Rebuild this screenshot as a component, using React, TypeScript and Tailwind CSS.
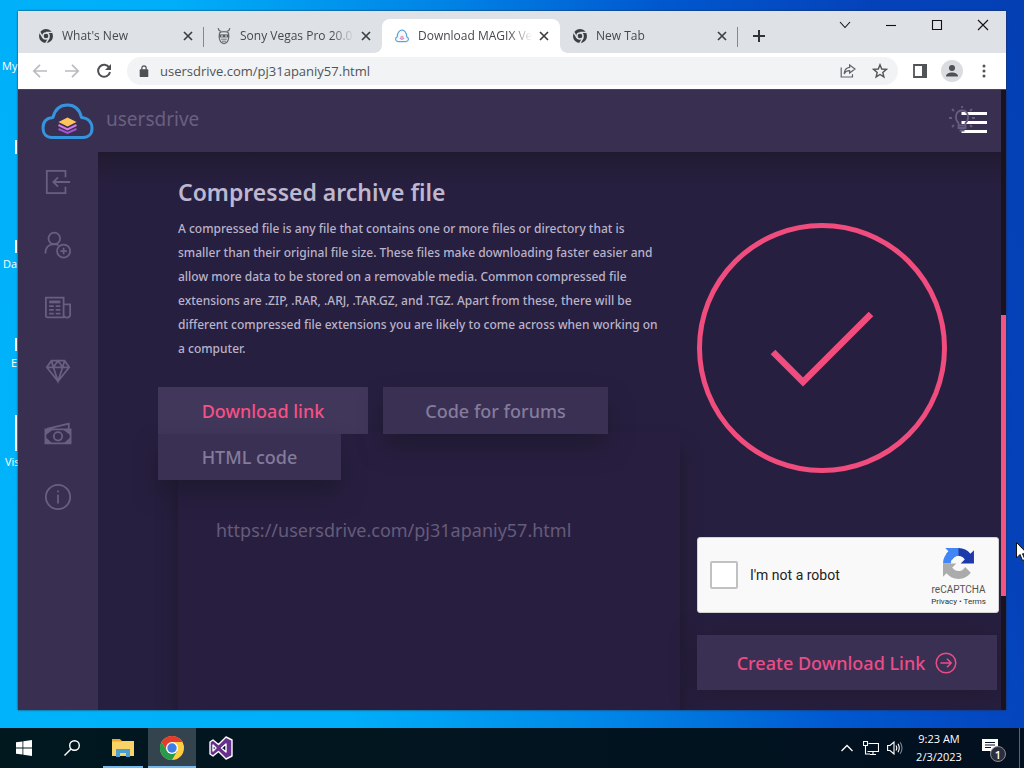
import React from "react";

const uiFont = "font-['Open_Sans','Noto_Sans',sans-serif]";
const siteFont = "font-['Noto_Sans',sans-serif]";

function ChromeMono() {
  return (
    <svg viewBox="0 0 16 16" className="size-4 shrink-0" aria-hidden="true">
      <circle cx="8" cy="8" r="7" fill="#3c4043" />
      <circle cx="8" cy="8" r="3.1" fill="#3c4043" stroke="#dee1e6" strokeWidth="1.5" />
      <path d="M8 4.4H14.4M5 9.8L1.7 4.2M11 9.9L7.9 15.2" stroke="#dee1e6" strokeWidth="1.4" />
    </svg>
  );
}

function MaskIcon() {
  return (
    <svg viewBox="0 0 16 18" className="h-[18px] w-4 shrink-0" fill="none" stroke="#66696d" aria-hidden="true">
      <path d="M2.2 1.2C2.6 3.4 4 4.4 5.4 4.2M13.8 1.2C13.4 3.4 12 4.4 10.6 4.2" strokeWidth="1.2" />
      <path d="M3.5 6.2C4.6 4 11.4 4 12.5 6.2 13.6 11 12 16.4 8 16.6 4 16.4 2.4 11 3.5 6.2Z" strokeWidth="1.2" />
      <path d="M3.4 7.4H12.6V10.4H3.4Z" fill="#55585c" stroke="none" />
      <path d="M4.8 9H7M9 9H11" stroke="#e8eaed" strokeWidth="1" />
      <path d="M5.2 12.2H10.8M6 14.2H10" strokeWidth=".9" />
    </svg>
  );
}

function CloudFavicon() {
  return (
    <svg viewBox="0 0 16 16" className="size-4 shrink-0" aria-hidden="true">
      <path d="M4 13.6C1 13.4.8 9.8 3.2 8.9 3 4.2 6 2.2 8 2.2S13 4.2 12.8 8.9C15.2 9.8 15 13.4 12 13.6Z" fill="#f7f9fd" stroke="#58a7df" strokeWidth="1.2" />
      <path d="M5.8 9L8 7.6 10.2 9 8 10.4Z" fill="#f0a7a0" />
      <path d="M5.8 10.2L8 11.4 10.2 10.2" fill="none" stroke="#c88be0" strokeWidth="1.2" />
    </svg>
  );
}

function CloseGlyph() {
  return (
    <svg viewBox="0 0 10 10" className="size-[10px]" stroke="#3c4043" strokeWidth="1.7" aria-hidden="true">
      <path d="M1 1L9 9M9 1L1 9" />
    </svg>
  );
}

type TabProps = { title: string; icon: React.ReactNode; active?: boolean; divider?: boolean };

function BrowserTab({ title, icon, active, divider }: TabProps) {
  return (
    <div className={`relative flex h-[34px] w-[178px] min-w-0 items-center rounded-t-lg pr-2 pl-3 ${active ? "bg-white" : ""}`}>
      {icon}
      <span className="ml-2 min-w-0 flex-1 overflow-hidden text-xs whitespace-nowrap text-[#45494d] [mask-image:linear-gradient(to_right,black_80%,transparent)]">
        {title}
      </span>
      <button aria-label={`Close ${title}`} className="ml-1 flex size-4 items-center justify-center">
        <CloseGlyph />
      </button>
      {divider && <span className="absolute top-2 right-0 h-5 w-px bg-[#85888c]" />}
      {active && (
        <>
          <svg viewBox="0 0 8 8" className="absolute bottom-0 -left-2 size-2" fill="#fff" aria-hidden="true"><path d="M8 0V8H0C4.4 8 8 4.4 8 0Z" /></svg>
          <svg viewBox="0 0 8 8" className="absolute -right-2 bottom-0 size-2" fill="#fff" aria-hidden="true"><path d="M0 0V8H8C3.6 8 0 4.4 0 0Z" /></svg>
        </>
      )}
    </div>
  );
}

function TitleBar() {
  return (
    <div className="flex h-[42px] items-end bg-[#dee1e6] pl-2">
      <BrowserTab title="What's New" icon={<ChromeMono />} divider />
      <BrowserTab title="Sony Vegas Pro 20.0.9" icon={<MaskIcon />} />
      <BrowserTab title="Download MAGIX Vegas" icon={<CloudFavicon />} active />
      <BrowserTab title="New Tab" icon={<ChromeMono />} divider />
      <button aria-label="New tab" className="ml-[9px] flex h-[34px] w-6 items-center justify-center">
        <svg viewBox="0 0 12 12" className="size-3" stroke="#303336" strokeWidth="2" aria-hidden="true"><path d="M6 0V12M0 6H12" /></svg>
      </button>
      <div className="ml-auto flex self-start">
        {[
          ["Search tabs", "M2 4L7 9.5 12 4"],
          ["Minimize", "M2 7.5H12"],
          ["Maximize", "M2.5 2.5H11.5V11.5H2.5Z"],
          ["Close window", "M2 2L12 12M12 2L2 12"],
        ].map(([label, d]) => (
          <button key={label} aria-label={label} className="flex h-7 w-[46px] items-center justify-center">
            <svg viewBox="0 0 14 14" className="size-[14px]" fill="none" stroke="#111" strokeWidth="1.1" aria-hidden="true"><path d={d} /></svg>
          </button>
        ))}
      </div>
    </div>
  );
}

function Toolbar() {
  return (
    <div className="flex h-[37px] items-center border-b border-[#4a4750] bg-white pr-[6px] pl-[6px]">
      <button aria-label="Back" className="flex w-8 justify-center">
        <svg viewBox="0 0 16 16" className="size-4" fill="none" stroke="#b9bbbe" strokeWidth="1.7" aria-hidden="true"><path d="M15 8H2M8 1.8L1.8 8 8 14.2" /></svg>
      </button>
      <button aria-label="Forward" className="flex w-8 justify-center">
        <svg viewBox="0 0 16 16" className="size-4" fill="none" stroke="#b9bbbe" strokeWidth="1.7" aria-hidden="true"><path d="M1 8H14M8 1.8L14.2 8 8 14.2" /></svg>
      </button>
      <button aria-label="Reload" className="flex w-8 justify-center">
        <svg viewBox="0 0 16 16" className="size-4" aria-hidden="true">
          <path d="M13.2 4.6A6 6 0 1 0 14 9" fill="none" stroke="#4d5156" strokeWidth="2" />
          <path d="M15 1V7H9Z" fill="#4d5156" />
        </svg>
      </button>
      <div className="ml-[7px] flex h-7 min-w-0 flex-1 items-center rounded-full bg-[#f1f3f4] pr-[2px] pl-3">
        <svg viewBox="0 0 10 14" className="h-3 w-[10px]" aria-hidden="true">
          <rect x="0" y="5" width="10" height="9" rx="1" fill="#4d5156" />
          <path d="M2.5 6V3.5a2.5 2.5 0 0 1 5 0V6" fill="none" stroke="#4d5156" strokeWidth="1.4" />
        </svg>
        <input
          aria-label="Address"
          defaultValue="usersdrive.com/pj31apaniy57.html"
          className="ml-[11px] min-w-0 flex-1 bg-transparent text-[13px] leading-5 text-[#505459] outline-none"
        />
        <button aria-label="Share" className="flex w-8 justify-center">
          <svg viewBox="0 0 16 16" className="size-4" fill="none" stroke="#5f6368" strokeWidth="1.2" aria-hidden="true">
            <path d="M1.2 4.5V14H12.5V11.2" />
            <path d="M9.6 2L15 6 9.6 10V7.6C6.6 7.5 5.2 8.8 4.2 11 4.4 7.4 6.2 4.8 9.6 4.4Z" />
          </svg>
        </button>
        <button aria-label="Bookmark" className="flex w-8 justify-center">
          <svg viewBox="0 0 16 16" className="size-4" fill="none" stroke="#505458" strokeWidth="1.4" aria-hidden="true">
            <path d="M8 1.8L9.7 6 14.4 6.4 10.8 9.4 11.9 13.9 8 11.5 4.1 13.9 5.2 9.4 1.6 6.4 6.3 6Z" />
          </svg>
        </button>
      </div>
      <button aria-label="Side panel" className="ml-[6px] flex w-8 justify-center">
        <svg viewBox="0 0 14 14" className="size-[14px]" aria-hidden="true"><path d="M1 1H13V13H1Z" fill="none" stroke="#505458" strokeWidth="1.8" /><path d="M9 0H14V14H9Z" fill="#505458" /></svg>
      </button>
      <button aria-label="Profile" className="flex w-8 justify-center">
        <svg viewBox="0 0 22 22" className="size-[22px]" aria-hidden="true"><circle cx="11" cy="11" r="11" fill="#dadce0" /><circle cx="11" cy="8" r="3" fill="#4d5156" /><path d="M5 16.5C5 13.5 8 12.4 11 12.4S17 13.5 17 16.5Z" fill="#4d5156" /></svg>
      </button>
      <button aria-label="Menu" className="flex w-8 justify-center">
        <svg viewBox="0 0 4 14" className="h-[14px] w-1" fill="#505458" aria-hidden="true"><circle cx="2" cy="2" r="1.5" /><circle cx="2" cy="7" r="1.5" /><circle cx="2" cy="12" r="1.5" /></svg>
      </button>
    </div>
  );
}

const navItems = [
  { label: "Login", art: <path d="M23 10V3H3V27H23V20M28 15H10M15 10L10 15 15 20" /> },
  { label: "Sign up", art: <><circle cx="11" cy="8" r="6.2" /><path d="M1.5 24C1.5 17 5.5 14 11 14 13 14 14.5 14.5 15.5 15.2" /><circle cx="21" cy="21.5" r="7" /><path d="M21 18V25M17.5 21.5H24.5" /></> },
  { label: "News", art: <><path d="M2 4H21V25H4C2.5 25 2 24 2 23ZM21 11H28V22C28 26 23 26 21.5 23.5" /><path d="M5.5 8.5H17.5" strokeWidth="3" /><path d="M5.5 13H10.5M12.5 13H17.5M5.5 17H10.5M12.5 17H17.5M5.5 21H10.5M12.5 21H17.5" /></> },
  { label: "Premium", art: <><path d="M8 4H22L27 11 15 26 3 11ZM3 11H27M10 11L15 26 20 11 15 4 10 11 8 4M20 11L22 4" /></> },
  { label: "Earn money", art: <><path d="M1.5 10H28.5V25H1.5ZM3 9.5L26.5 4V9.5" /><circle cx="15" cy="17.5" r="4.5" /><path d="M2 11H7L2 15ZM23 11H28V15ZM2 20L7 24.5H2ZM28 20V24.5H23Z" fill="currentColor" /></> },
  { label: "About", art: <><circle cx="15" cy="15" r="13" /><path d="M15 12.5V22M15 8V10" /></> },
];

function SideNav() {
  return (
    <nav className="-mt-[2px] w-20 shrink-0 bg-[#392f51]">
      {navItems.map(({ label, art }) => (
        <a key={label} href={`#${label}`} aria-label={label} className="flex h-[63px] items-center justify-center text-[#696080]">
          <svg viewBox="0 0 30 30" className="size-7" fill="none" stroke="currentColor" strokeWidth="1.9" aria-hidden="true">{art}</svg>
        </a>
      ))}
    </nav>
  );
}

function SiteHeader() {
  return (
    <header className="flex h-[62px] items-center bg-[#392f51] pr-[14px] pl-[22px]">
      <a href="#home" className="flex items-center text-[19px] leading-7 text-[#696080]">
        <svg viewBox="0 0 54 38" className="h-[38px] w-[54px]" fill="none" aria-hidden="true">
          <path d="M12 35.5C5.500 35.500 3 31 3 26 3 19 7 16 13 15.500 15 7 20.500 3 27.500 3S39.500 7 41.500 15.500C48 16 52 20 52 26.500 52 32 48.500 35.500 43 35.500Z" stroke="#3594dd" strokeWidth="3" strokeLinejoin="round" />
          <path d="M18.5 20L27.5 15.5 36.5 20 27.5 24.5Z" fill="#ffc45d" />
          <path d="M18.5 23L27.5 27.3 36.5 23" stroke="#d479e8" strokeWidth="2" />
          <path d="M18.5 27L27.5 31 36.5 27" stroke="#a652d4" strokeWidth="2" />
        </svg>
        <span className="ml-3 pb-1">usersdrive</span>
      </a>
      <button aria-label="Menu and theme" className="ml-auto">
        <svg viewBox="0 0 38 30" className="h-[30px] w-[38px]" fill="none" aria-hidden="true">
          <path d="M12.5 7.5H38M12.5 16.5H38M12.5 25.5H38" stroke="#fff" strokeWidth="3" />
          <g stroke="#665d7e" strokeWidth="1.8"><path d="M9.5 17C5.5 13.5 6 4.5 13 4.5S20.5 13.5 16.5 17V22H9.5ZM10 19.5H16M10.5 24.5H15.5" /><path d="M0 12H3M23 12H26M3 3L5 5M23 3L21 5M3 21L5 19M23 21L21 19M13 0V2" /></g>
        </svg>
      </button>
    </header>
  );
}

function RecaptchaLogo() {
  return (
    <svg viewBox="0 0 64 64" className="size-[31px]" aria-hidden="true">
      <path d="M64 32C64 31.5 64 31.1 63.9 30.6V4.6L56.7 11.8C50.8 4.6 42 0 32 0 21.6 0 12.4 4.9 6.6 12.6L18.4 24.5C19.5 22.3 21.2 20.5 23.1 19.1 25.1 17.5 28 16.2 32 16.2 32.5 16.2 32.9 16.3 33.2 16.4 38.1 16.7 42.4 19.5 44.9 23.5L36.5 31.9Z" fill="#1c3aa9" />
      <path d="M31.9 0H4.6L11.8 7.2C4.6 13.1 0 22 0 32H16.2C16.2 28.5 17.1 25.8 18.4 24.5 19.5 22.3 21.2 20.5 23.1 19.1 25.1 17.5 28 16.2 32 16.2Z" fill="#4285f4" />
      <path d="M0 32V59.3L7.2 52.1C13.1 59.3 22 63.9 32 63.9 42.4 63.9 51.6 59 57.4 51.3L45.6 39.4C44.4 41.5 42.8 43.4 40.9 44.8 38.9 46.4 36 47.7 32 47.7 26.2 47.3 21.5 44.4 19 40.4L27.5 31.9Z" fill="#ababab" />
    </svg>
  );
}

function DownloadInfo() {
  return (
    <section className="flex w-[522px] shrink-0 flex-col">
      <h1 className="ml-5 text-[23px] leading-8 font-semibold text-[#bdb7cf]">Compressed archive file</h1>
      <p className="mt-[9px] ml-5 text-xs leading-6 font-medium text-[#b9b3ca]">
        A compressed file is any file that contains one or more files or directory that is
        <br />smaller than their original file size. These files make downloading faster easier and
        <br />allow more data to be stored on a removable media. Common compressed file
        <br />extensions are .ZIP, .RAR, .ARJ, .TAR.GZ, and .TGZ. Apart from these, there will be
        <br />different compressed file extensions you are likely to come across when working on
        <br />a computer.
      </p>
      <div className="relative z-[1] mt-[26px] flex flex-wrap gap-x-[15px] text-lg font-medium text-[#847c9a]">
        <button className="h-[47px] w-[210px] bg-[#41375b] text-[#f65084]">Download link</button>
        <button className="h-[47px] w-[225px] bg-[#3a3054] shadow-[0_14px_22px_#1c182bb0]">Code for forums</button>
        <button className="h-[46px] w-[183px] bg-[#3a3054] shadow-[0_14px_22px_#1c182bb0]">HTML code</button>
      </div>
      <div className="-mt-12 ml-5 flex-1 bg-[#281f40] pt-[84px] pl-[38px] text-lg text-[#655c7a] shadow-[0_16px_16px_#1e192c]">
        https://usersdrive.com/pj31apaniy57.html
      </div>
    </section>
  );
}

function CreateLink() {
  return (
    <section className="ml-[17px] flex w-[302px] shrink-0 flex-col">
      <svg viewBox="0 0 250 250" className="mt-[47px] size-[250px]" fill="none" stroke="#f04d7e" aria-hidden="true">
        <circle cx="125" cy="125" r="122.5" strokeWidth="5" />
        <path d="M76 129L106 159 174 91" strokeWidth="6.5" />
      </svg>
      <div className="mt-16 flex h-[76px] items-center rounded-[3px] border border-[#d3d3d3] bg-[#f9f9f9] pl-3 font-['Roboto',sans-serif] text-[#222]">
        <input id="robot" type="checkbox" className="size-7 appearance-none rounded-xs border-2 border-[#c1c1c1] bg-white" />
        <label htmlFor="robot" className="ml-3 text-sm">I'm not a robot</label>
        <div className="mr-3 ml-auto flex flex-col items-center pt-1 text-[#555]">
          <RecaptchaLogo />
          <span className="mt-1 text-[10px] leading-[14px]">reCAPTCHA</span>
          <span className="text-[8px] leading-[10px] text-[#333]"><a href="#privacy">Privacy</a> • <a href="#terms">Terms</a></span>
        </div>
      </div>
      <button className="mt-[22px] flex h-[55px] w-[300px] items-center justify-center gap-[10px] bg-[#3a3054] text-lg font-medium text-[#ea4d86] shadow-[0_4px_24px_#1f192ab0]">
        Create Download Link
        <svg viewBox="0 0 22 22" className="size-[22px]" fill="none" stroke="currentColor" strokeWidth="1.5" aria-hidden="true"><circle cx="11" cy="11" r="9.8" /><path d="M5.5 11H16M12 6.8L16.2 11 12 15.2" /></svg>
      </button>
    </section>
  );
}

function BrowserWindow() {
  return (
    <div className="flex flex-1 flex-col shadow-[0_0_2px_#2b2b3a]">
      <TitleBar />
      <Toolbar />
      <div className={`flex flex-1 ${siteFont}`}>
        <div className="flex min-w-0 flex-1 flex-col">
          <SiteHeader />
          <div className="flex flex-1">
            <SideNav />
            <main className="flex min-w-0 flex-1 overflow-hidden bg-[#271f3f] bg-[linear-gradient(#201a30,#241d38_14px,#271f3f_36px)] pt-6 pl-[60px]">
              <DownloadInfo />
              <CreateLink />
            </main>
          </div>
        </div>
        <div className="w-[5px] bg-[#18131f] pt-[225px]">
          <div className="h-[281px] bg-[#f2557f]" />
        </div>
      </div>
    </div>
  );
}

const shortcuts = [
  { label: "My", box: "top-[57px] left-0.5", mark: "top-[140px] h-[14px]" },
  { label: "Da", box: "top-[255px] left-[3px]", mark: "top-[240px] h-[13px]" },
  { label: "E", box: "top-[354px] left-[11px]", mark: "top-[338px] h-[13px]" },
  { label: "Vis", box: "top-[453px] left-[5px]", mark: "top-[415px] h-[36px]" },
];

function Taskbar() {
  return (
    <footer className="relative z-10 flex h-10 items-stretch bg-[linear-gradient(to_right,#01181f,#021020)] text-white">
      <button aria-label="Start" className="flex w-12 items-center justify-center">
        <svg viewBox="0 0 16 16" className="size-4" fill="#fff" aria-hidden="true"><path d="M0 2.3L6.5 1.4V7.5H0ZM7.3 1.3L16 0V7.5H7.3ZM0 8.4H6.5V14.6L0 13.7ZM7.3 8.4H16V16L7.3 14.7Z" /></svg>
      </button>
      <button aria-label="Search" className="flex w-12 items-center justify-center">
        <svg viewBox="0 0 16 16" className="size-4" fill="none" stroke="#fff" strokeWidth="1.4" aria-hidden="true"><circle cx="10.5" cy="5.5" r="4.8" /><path d="M7 9L.5 15.5" /></svg>
      </button>
      <button aria-label="File Explorer" className="ml-[7px] flex w-10 items-center justify-center border-b-2 border-[#76b9ed] pt-0.5">
        <svg viewBox="0 0 22 20" className="h-5 w-[22px]" aria-hidden="true"><path d="M0 2H8L10 3H22V18H0Z" fill="#f9d365" /><path d="M0 1H8L10 3.5H0Z" fill="#e8a92e" /><path d="M4 11H18V19H14V15H8V19H4Z" fill="#4a9fd0" /></svg>
      </button>
      <button aria-label="Google Chrome" className="ml-[5px] flex w-12 items-center justify-center border-b-2 border-[#76b9ed] bg-[#33444f] pt-0.5">
        <svg viewBox="0 0 24 24" className="size-6" aria-hidden="true">
          <circle cx="12" cy="12" r="12" fill="#ffcd40" />
          <path d="M1.600 6A12 12 0 0 1 22.4 6H12L6.8 15Z" fill="#e33b2e" />
          <path d="M1.600 6A12 12 0 0 0 12 24L17.2 15H12L6.8 15Z" fill="#279b4d" />
          <circle cx="12" cy="12" r="6" fill="#fff" /><circle cx="12" cy="12" r="4.7" fill="#3d7de4" />
        </svg>
      </button>
      <button aria-label="Visual Studio" className="flex w-[50px] items-center justify-center">
        <svg viewBox="0 0 24 24" className="size-6" aria-hidden="true"><path d="M17 1L23 4V20L17 23 9.5 15.5 4 20 1 18V6L4 4 9.5 8.5ZM4 9V15L7 12ZM17 8L12.5 12 17 16Z" fill="#68308e" fillRule="evenodd" stroke="#fff" strokeWidth="1.4" strokeLinejoin="round" /></svg>
      </button>
      <div className="ml-auto flex items-center">
        <svg viewBox="0 0 12 8" className="h-2 w-3" fill="none" stroke="#fff" strokeWidth="1.3" aria-hidden="true"><path d="M.5 7L6 1.5 11.5 7" /></svg>
        <svg viewBox="0 0 16 14" className="ml-[10px] h-[14px] w-4" fill="none" stroke="#fff" strokeWidth="1.1" aria-hidden="true"><path d="M5.5 2.5H15.5V10.5H4.5M10 10.5V13.5M7 13.5H13M.5.5H4.5V4.5H.5ZM2.5 4.5V13H7" /></svg>
        <svg viewBox="0 0 17 14" className="ml-2 h-[14px] w-[17px]" fill="none" stroke="#fff" strokeWidth="1.1" aria-hidden="true"><path d="M.6 4.5H3L7 1V13L3 9.5H.6ZM9 4.5Q10.5 7 9 9.5M11 2.8Q13.5 7 11 11.2" /><path d="M13.2 1.2Q16.8 7 13.2 12.8" stroke="#7d8791" /></svg>
        <div className="ml-[10px] w-[50px] text-center text-[11px] leading-[18px] whitespace-nowrap">
          <div>9:23 AM</div><div>2/3/2023</div>
        </div>
        <button aria-label="Notifications, 1 new" className="relative mr-[13px] ml-[18px] size-6">
          <svg viewBox="0 0 24 24" className="size-6" aria-hidden="true"><path d="M0 3H16V15H12V19L8 15H0Z" fill="#fff" /><path d="M3 6.5H13M3 9H13M3 11.5H9" stroke="#06142b" strokeWidth="1.1" /></svg>
          <span className="absolute top-[10px] left-2 flex size-4 items-center justify-center rounded-full border border-[#8b8d94] bg-[#2b2f3d] text-[11px] leading-none font-semibold">1</span>
        </button>
      </div>
      <div className="mr-1 w-px bg-[#5a6473]" />
    </footer>
  );
}

export default function App() {
  return (
    <div className={`relative flex min-h-screen flex-col overflow-hidden bg-[linear-gradient(76deg,#00b4fa_0%,#00aef9_30%,#0084e6_52%,#0058cf_70%,#0541b9_88%,#0440b4_100%)] ${uiFont}`}>
      {shortcuts.map((s) => (
        <React.Fragment key={s.label}>
          <span className={`absolute text-[11px] leading-[18px] text-white ${s.box}`}>{s.label}</span>
          <span className={`absolute left-[15px] w-0.5 bg-white ${s.mark}`} />
        </React.Fragment>
      ))}
      <div className="relative flex flex-1 flex-col px-[18px] pt-[11px] pb-[18px]">
        <BrowserWindow />
      </div>
      <svg viewBox="0 0 12 20" className="absolute top-[542px] left-[1016px] h-5 w-3" fill="#fff" stroke="#111" aria-hidden="true"><path d="M.5.5V16L4 12.5 6.5 18.5 9 17.5 6.5 11.8H11.5Z" /></svg>
      <Taskbar />
    </div>
  );
}
